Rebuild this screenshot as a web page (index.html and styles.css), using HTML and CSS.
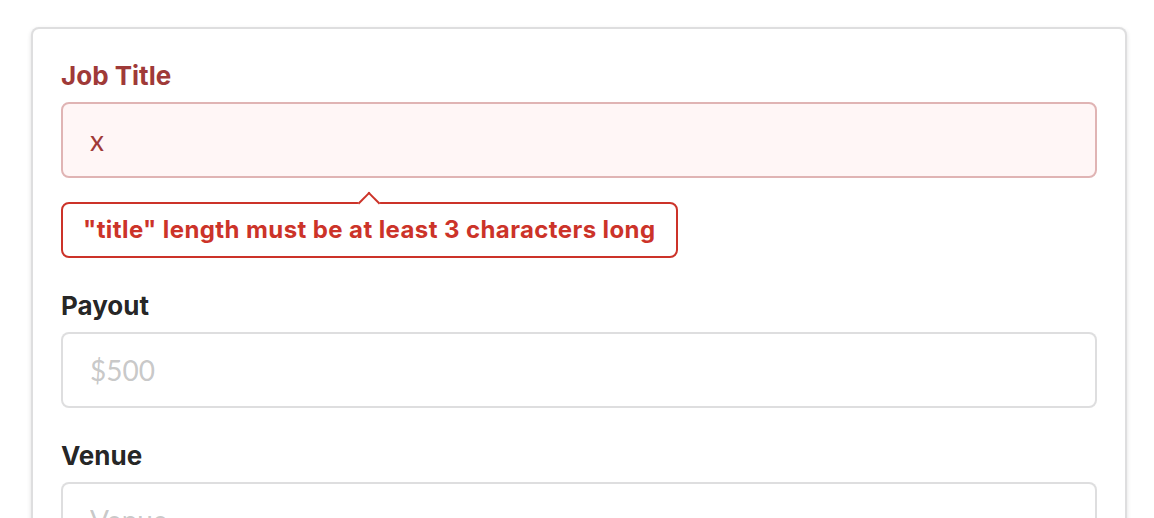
FILE: index.html
```html
<!DOCTYPE html>
<html lang="en">
<head>
<meta charset="utf-8">
<link rel="stylesheet" href="styles.css">
</head>
<body>
  <div class="segment">
    <form class="form">
      <div class="field error">
        <label class="field-label">Job Title</label>
        <input class="input" type="text" value="x">
        <div class="prompt">"title" length must be at least 3 characters long</div>
      </div>
      <div class="field">
        <label class="field-label">Payout</label>
        <input class="input" type="text" placeholder="$500">
      </div>
      <div class="field">
        <label class="field-label">Venue</label>
        <input class="input" type="text" placeholder="Venue">
      </div>
    </form>
  </div>
</body>
</html>
```

FILE: styles.css
```css
html, body {
  margin: 0;
  padding: 0;
  background: #ffffff;
}
body {
  font-family: Inter, "Helvetica Neue", Arial, sans-serif;
  padding: 27px 27px 0 31px;
  height: 518px;
  box-sizing: border-box;
  overflow: hidden;
}
.segment {
  border: 2px solid rgba(34, 36, 38, 0.15);
  border-radius: 8px;
  box-shadow: 0 2px 4px 0 rgba(34, 36, 38, 0.15);
  padding: 28px 28px 28px 28px;
  background: #fff;
}
.form {
  margin: 0;
}
.field {
  margin: 0 0 29px;
  display: flex;
  flex-direction: column;
  align-items: flex-start;
}
.field-label {
  display: block;
  font-family: Inter, "Helvetica Neue", Arial, sans-serif;
  font-size: 26px;
  font-weight: 700;
  line-height: 37px;
  margin: 0 0 8px;
  color: rgba(0, 0, 0, 0.87);
}
.input {
  box-sizing: border-box;
  width: 100%;
  font-family: Lato, "Helvetica Neue", Arial, sans-serif;
  font-size: 28px;
  line-height: 34px;
  padding: 19px 27px;
  border: 2px solid rgba(34, 36, 38, 0.15);
  border-radius: 8px;
  color: rgba(0, 0, 0, 0.87);
  background: #fff;
  outline: none;
  margin: 0;
}
.input::placeholder {
  color: rgba(191, 191, 191, 0.87);
}
.field.error .field-label {
  color: #9f3a38;
}
.field.error .input {
  background: #fff6f6;
  border-color: #e0b4b4;
  color: #9f3a38;
}
.prompt {
  position: relative;
  margin-top: 24px;
  font-family: Inter, "Helvetica Neue", Arial, sans-serif;
  font-size: 24px;
  font-weight: 700;
  letter-spacing: 0.4px;
  line-height: 24px;
  padding: 14px 20px;
  border: 2px solid #cc3329;
  border-radius: 8px;
  color: #cc3329;
  background: #fff;
}
.prompt::before {
  content: "";
  position: absolute;
  width: 16px;
  height: 16px;
  top: 0;
  left: 50%;
  background: #fff;
  border-style: solid;
  border-color: #cc3329;
  border-width: 2px 0 0 2px;
  transform: translate(-50%, -50%) translateY(-1px) rotate(45deg);
  box-sizing: border-box;
}
```
